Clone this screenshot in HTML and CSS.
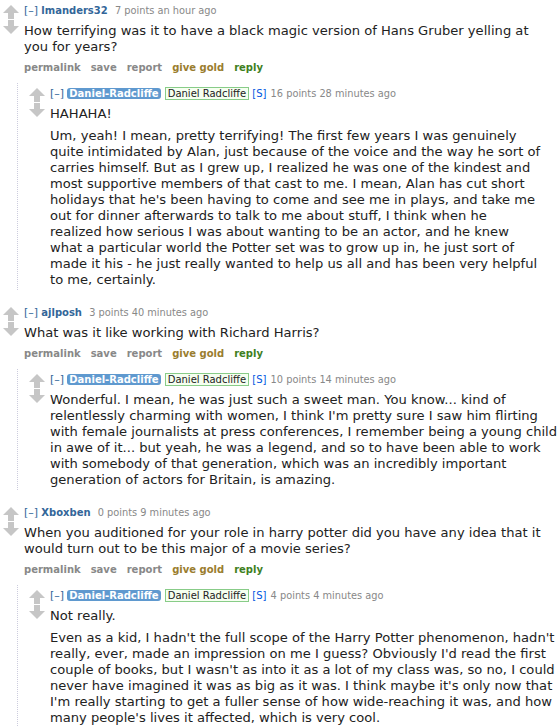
FILE: index.html
```html
<!DOCTYPE html>
<html><head><meta charset="UTF-8" /><link rel="stylesheet" href="styles.css"></head>
<body>
<div class="comment">
	<div class="arrows">
		<svg class="up" width="18" height="14" viewBox="0 0 18 14"><path d="M9 0L17 8H12V14H6V8H1Z" /></svg>
		<svg class="down" width="18" height="14" viewBox="0 0 18 14"><path d="M9 14L17 6H12V0H6V6H1Z" /></svg>
	</div>
	<div class="entry">
		<p class="tagline"><span class="expand">[&ndash;]</span> <span class="author">lmanders32</span> <span class="score">7 points an hour ago</span></p>
		<div class="md"><p>How terrifying was it to have a black magic version of Hans Gruber yelling at<br>
		you for years?</p></div>
		<ul class="buttons"><li>permalink</li><li>save</li><li>report</li><li class="gold">give gold</li><li class="reply">reply</li></ul>
	</div>
</div>
<div class="child">
	<div class="comment">
		<div class="arrows">
			<svg class="up" width="18" height="14" viewBox="0 0 18 14"><path d="M9 0L17 8H12V14H6V8H1Z" /></svg>
			<svg class="down" width="18" height="14" viewBox="0 0 18 14"><path d="M9 14L17 6H12V0H6V6H1Z" /></svg>
		</div>
		<div class="entry">
			<p class="tagline"><span class="expand">[&ndash;]</span> <span class="submitter">Daniel-Radcliffe</span> <span class="flair">Daniel Radcliffe</span> <span class="s">[S]</span> <span class="score">16 points 28 minutes ago</span></p>
			<div class="md">
				<p>HAHAHA!</p>
				<p>Um, yeah! I mean, pretty terrifying! The first few years I was genuinely<br>
				quite intimidated by Alan, just because of the voice and the way he sort of<br>
				carries himself. But as I grew up, I realized he was one of the kindest and<br>
				most supportive members of that cast to me. I mean, Alan has cut short<br>
				holidays that he's been having to come and see me in plays, and take me<br>
				out for dinner afterwards to talk to me about stuff, I think when he<br>
				realized how serious I was about wanting to be an actor, and he knew<br>
				what a particular world the Potter set was to grow up in, he just sort of<br>
				made it his - he just really wanted to help us all and has been very helpful<br>
				to me, certainly.</p>
			</div>
		</div>
	</div>
</div>

<div class="comment">
	<div class="arrows">
		<svg class="up" width="18" height="14" viewBox="0 0 18 14"><path d="M9 0L17 8H12V14H6V8H1Z" /></svg>
		<svg class="down" width="18" height="14" viewBox="0 0 18 14"><path d="M9 14L17 6H12V0H6V6H1Z" /></svg>
	</div>
	<div class="entry">
		<p class="tagline"><span class="expand">[&ndash;]</span> <span class="author">ajlposh</span> <span class="score">3 points 40 minutes ago</span></p>
		<div class="md"><p>What was it like working with Richard Harris?</p></div>
		<ul class="buttons"><li>permalink</li><li>save</li><li>report</li><li class="gold">give gold</li><li class="reply">reply</li></ul>
	</div>
</div>
<div class="child">
	<div class="comment">
		<div class="arrows">
			<svg class="up" width="18" height="14" viewBox="0 0 18 14"><path d="M9 0L17 8H12V14H6V8H1Z" /></svg>
			<svg class="down" width="18" height="14" viewBox="0 0 18 14"><path d="M9 14L17 6H12V0H6V6H1Z" /></svg>
		</div>
		<div class="entry">
			<p class="tagline"><span class="expand">[&ndash;]</span> <span class="submitter">Daniel-Radcliffe</span> <span class="flair">Daniel Radcliffe</span> <span class="s">[S]</span> <span class="score">10 points 14 minutes ago</span></p>
			<div class="md">
				<p>Wonderful. I mean, he was just such a sweet man. You know... kind of<br>
				relentlessly charming with women, I think I'm pretty sure I saw him flirting<br>
				with female journalists at press conferences, I remember being a young child<br>
				in awe of it... but yeah, he was a legend, and so to have been able to work<br>
				with somebody of that generation, which was an incredibly important<br>
				generation of actors for Britain, is amazing.</p>
			</div>
		</div>
	</div>
</div>

<div class="comment">
	<div class="arrows">
		<svg class="up" width="18" height="14" viewBox="0 0 18 14"><path d="M9 0L17 8H12V14H6V8H1Z" /></svg>
		<svg class="down" width="18" height="14" viewBox="0 0 18 14"><path d="M9 14L17 6H12V0H6V6H1Z" /></svg>
	</div>
	<div class="entry">
		<p class="tagline"><span class="expand">[&ndash;]</span> <span class="author">Xboxben</span> <span class="score">0 points 9 minutes ago</span></p>
		<div class="md"><p>When you auditioned for your role in harry potter did you have any idea that it<br>
		would turn out to be this major of a movie series?</p></div>
		<ul class="buttons"><li>permalink</li><li>save</li><li>report</li><li class="gold">give gold</li><li class="reply">reply</li></ul>
	</div>
</div>
<div class="child">
	<div class="comment">
		<div class="arrows">
			<svg class="up" width="18" height="14" viewBox="0 0 18 14"><path d="M9 0L17 8H12V14H6V8H1Z" /></svg>
			<svg class="down" width="18" height="14" viewBox="0 0 18 14"><path d="M9 14L17 6H12V0H6V6H1Z" /></svg>
		</div>
		<div class="entry">
			<p class="tagline"><span class="expand">[&ndash;]</span> <span class="submitter">Daniel-Radcliffe</span> <span class="flair">Daniel Radcliffe</span> <span class="s">[S]</span> <span class="score">4 points 4 minutes ago</span></p>
			<div class="md">
				<p>Not really.</p>
				<p>Even as a kid, I hadn't the full scope of the Harry Potter phenomenon, hadn't<br>
				really, ever, made an impression on me I guess? Obviously I'd read the first<br>
				couple of books, but I wasn't as into it as a lot of my class was, so no, I could<br>
				never have imagined it was as big as it was. I think maybe it's only now that<br>
				I'm really starting to get a fuller sense of how wide-reaching it was, and how<br>
				many people's lives it affected, which is very cool.</p>
			</div>
		</div>
	</div>
</div>
</body></html>
```

FILE: styles.css
```css
html, body { overflow-x: hidden; }
body { margin: 0; background: #fff; font-family: "DejaVu Sans", Verdana, sans-serif; color: #222; }
p { margin: 0; }
.comment { display: flex; padding: 3px 0 0 2px; }
.arrows { width: 22px; flex: none; display: flex; flex-direction: column; padding-top: 2px; }
.arrows svg { fill: #c6c6c6; display: block; }
.arrows .down { margin-top: 1px; }
.entry { flex: 1; min-width: 0; }
.tagline { font-size: 10px; color: #888; line-height: 16px; }
.expand { color: #369; font-size: 11px; }
.author { color: #369; font-weight: bold; margin-right: 4px; }
.score { font-size: 9.8px; }
.submitter { background: #5f99cf; color: #fff; font-weight: bold; padding: 0 2px; border-radius: 3px; }
.flair { color: #222; background: #f5fff0; border: 1px solid #8c8; padding: 0 2px; margin-left: 1px; }
.s { color: #0055df; margin-right: 1px; }
.md { font-size: 13.1px; line-height: 16px; padding: 4px 0 2px; white-space: nowrap; }
.md p { margin-bottom: 6px; }
.md p:last-child { margin-bottom: 0; }
.buttons { list-style: none; margin: 3px 0 0; padding: 0; display: flex; gap: 10px; font-size: 10px; font-weight: bold; color: #888; line-height: 16px; }
.buttons .gold { color: #9a7d2e; }
.buttons .reply { color: #3f7f1f; }
.child { margin: 7px 0 12px 17px; border-left: 1px dotted #ccd; padding-left: 8px; }
```
